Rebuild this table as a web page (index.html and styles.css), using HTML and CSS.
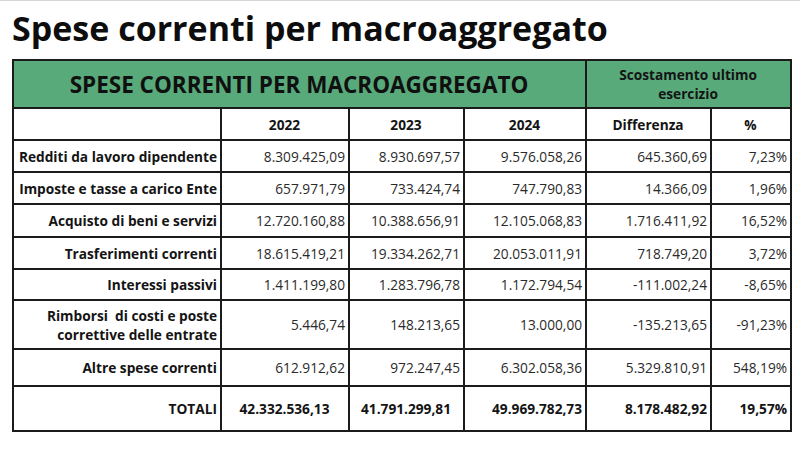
FILE: index.html
```html
<!DOCTYPE html>
<html lang="it">
<head>
<meta charset="utf-8">
<link rel="stylesheet" href="styles.css">
</head>
<body>
<div class="page">
  <h1 class="title">Spese correnti per macroaggregato</h1>
  <table class="tbl">
    <colgroup>
      <col class="c1"><col class="c2"><col class="c3"><col class="c4"><col class="c5"><col class="c6">
    </colgroup>
    <tr class="r-head">
      <th colspan="4" class="big">SPESE CORRENTI PER MACROAGGREGATO</th>
      <th colspan="2" class="sub">Scostamento ultimo<br>esercizio</th>
    </tr>
    <tr class="r-years">
      <th></th><th>2022</th><th>2023</th><th>2024</th><th>Differenza</th><th>%</th>
    </tr>
    <tr class="r1">
      <th class="lbl">Redditi da lavoro dipendente</th><td>8.309.425,09</td><td>8.930.697,57</td><td>9.576.058,26</td><td>645.360,69</td><td>7,23%</td>
    </tr>
    <tr class="r1">
      <th class="lbl">Imposte e tasse a carico Ente</th><td>657.971,79</td><td>733.424,74</td><td>747.790,83</td><td>14.366,09</td><td>1,96%</td>
    </tr>
    <tr class="r2">
      <th class="lbl">Acquisto di beni e servizi</th><td>12.720.160,88</td><td>10.388.656,91</td><td>12.105.068,83</td><td>1.716.411,92</td><td>16,52%</td>
    </tr>
    <tr class="r1">
      <th class="lbl">Trasferimenti correnti</th><td>18.615.419,21</td><td>19.334.262,71</td><td>20.053.011,91</td><td>718.749,20</td><td>3,72%</td>
    </tr>
    <tr class="r3">
      <th class="lbl">Interessi passivi</th><td>1.411.199,80</td><td>1.283.796,78</td><td>1.172.794,54</td><td>-111.002,24</td><td>-8,65%</td>
    </tr>
    <tr class="r-tall">
      <th class="lbl">Rimborsi&nbsp; di costi e poste<br>correttive delle entrate</th><td>5.446,74</td><td>148.213,65</td><td>13.000,00</td><td>-135.213,65</td><td>-91,23%</td>
    </tr>
    <tr class="r-mid">
      <th class="lbl">Altre spese correnti</th><td>612.912,62</td><td>972.247,45</td><td>6.302.058,36</td><td>5.329.810,91</td><td>548,19%</td>
    </tr>
    <tr class="r-tot">
      <th class="lbl">TOTALI</th><td class="mid">42.332.536,13</td><td class="mid">41.791.299,81</td><td>49.969.782,73</td><td>8.178.482,92</td><td>19,57%</td>
    </tr>
  </table>
</div>
</body>
</html>
```

FILE: styles.css
```css
html, body {
  margin: 0;
  padding: 0;
  background: #ffffff;
}
body {
  font-family: "Open Sans", "Noto Sans", "Liberation Sans", sans-serif;
  color: #111111;
  width: 800px;
  height: 460px;
  overflow: hidden;
  border-top: 1px solid #d6d6d6;
  box-sizing: border-box;
}
.page {
  padding: 0 0 0 12px;
}
.title {
  margin: 0;
  padding-top: 4px;
  height: 58px;
  box-sizing: border-box;
  font-size: 34px;
  line-height: 46px;
  font-weight: 700;
  color: #0d0d0d;
}
.tbl {
  border-collapse: collapse;
  table-layout: fixed;
  width: 778px;
  border: 2px solid #1b1b1b;
}
.c1 { width: 208px; }
.c2 { width: 128px; }
.c3 { width: 115px; }
.c4 { width: 122px; }
.c5 { width: 125px; }
.c6 { width: 80px; }
.tbl th, .tbl td {
  border: 2px solid #1b1b1b;
  padding: 0 3px 0 2px;
  font-size: 13.7px;
  line-height: 19px;
  color: #141414;
}
.tbl td {
  text-align: right;
  font-weight: 400;
  color: #2a2a2a;
}
.tbl th {
  font-weight: 700;
  text-align: center;
}
.tbl th.lbl {
  text-align: right;
}
.r-head th {
  background: #58aa7b;
  height: 46px;
}
.r-head .big {
  font-size: 22.5px;
  color: #101010;
}
.r-head .sub {
  font-size: 13.7px;
  line-height: 19px;
}
.r-years th { height: 30px; }
.r1 th, .r1 td { height: 30px; }
.r2 th, .r2 td { height: 31px; }
.r3 th, .r3 td { height: 29px; }
.r-tall th, .r-tall td { height: 47px; }
.r-mid th, .r-mid td { height: 35px; }
.r-tot th, .r-tot td { height: 43px; font-weight: 700; color: #141414; }
.tbl .r-tot td.mid { text-align: center; }
```
